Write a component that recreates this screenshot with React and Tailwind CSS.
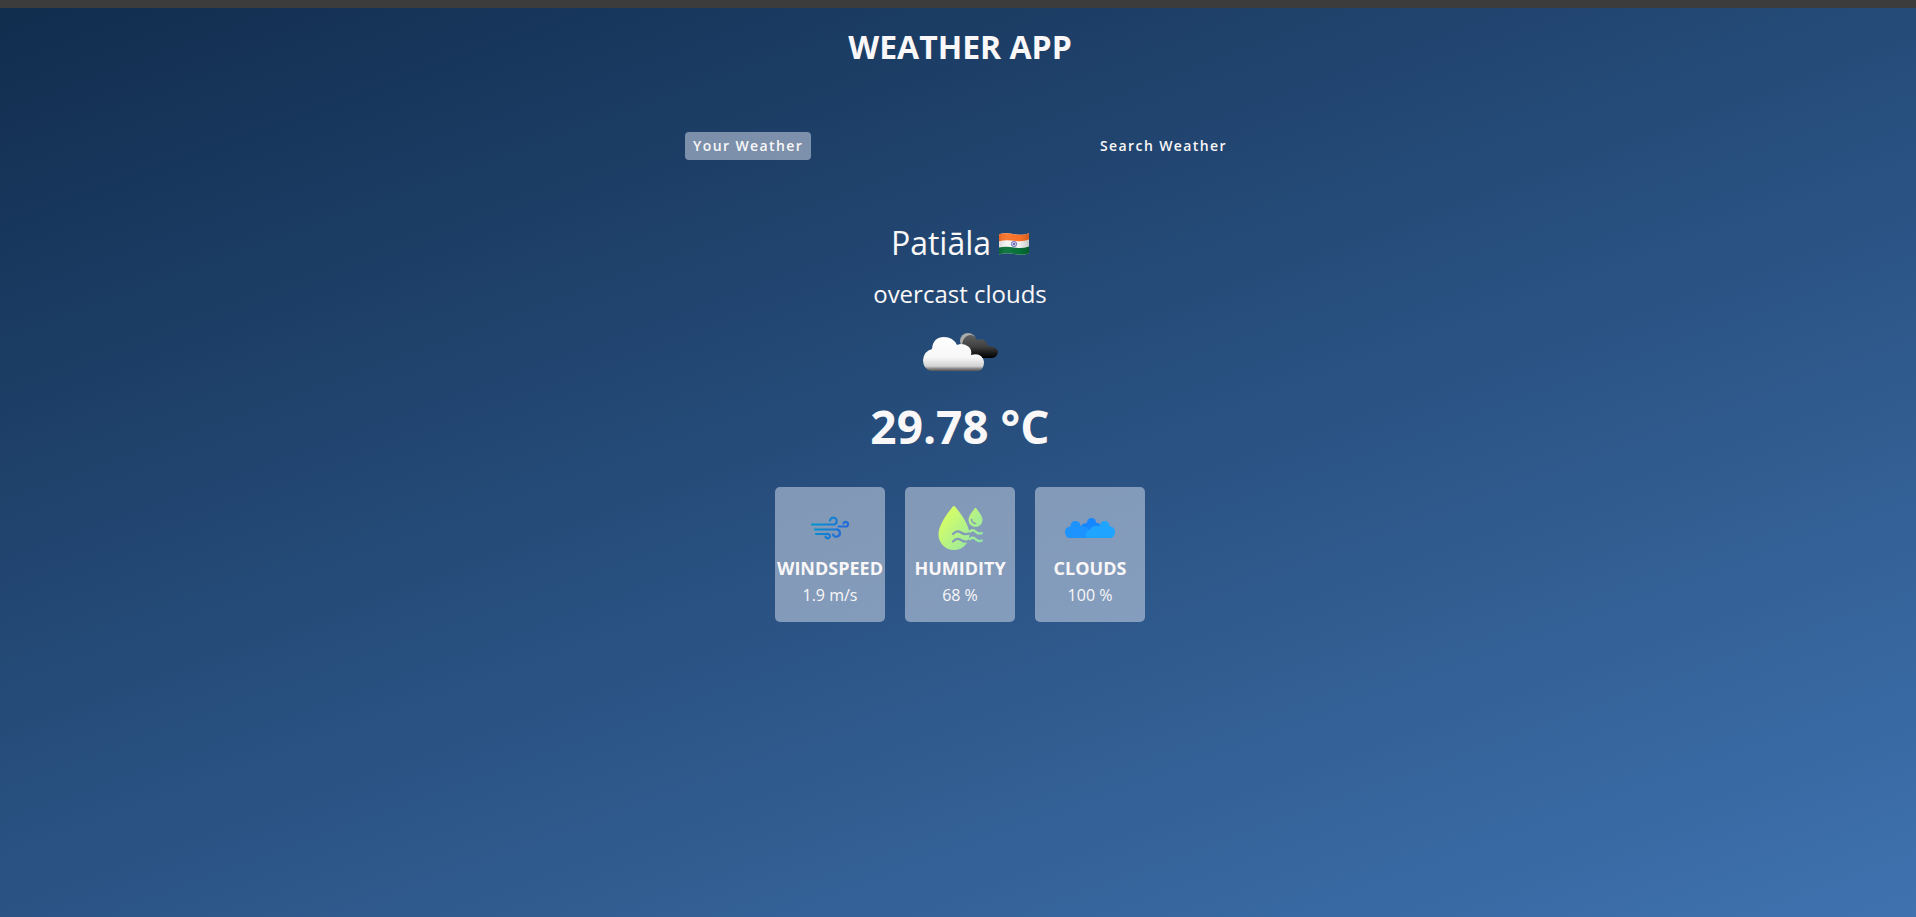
function IndiaFlag() {
  return (
    <svg viewBox="0 0 30 22" className="h-[22px] w-[30px]" role="img" aria-label="India">
      <defs>
        <clipPath id="flagShape">
          <path d="M0 1.2C5-.3 9 .2 15 1.2S25 2 30 .2V20.4C25 22 20 22 15 21S5 20 0 21.6Z" />
        </clipPath>
        <linearGradient id="flagShade" x1="0" x2="1">
          <stop offset="0" stopColor="#000" stopOpacity=".12" />
          <stop offset=".3" stopColor="#fff" stopOpacity=".05" />
          <stop offset=".7" stopColor="#000" stopOpacity=".02" />
          <stop offset="1" stopColor="#000" stopOpacity=".18" />
        </linearGradient>
      </defs>
      <g clipPath="url(#flagShape)">
        <rect width="30" height="22" fill="#f5f5f5" />
        <path d="M0 0H30V6.600C25 8.600 20 8.600 15 7.800S5 7 0 8.200Z" fill="#ff7328" />
        <path d="M0 14.600C5 13.200 10 13.500 15 14.400S25 15 30 13.400V22H0Z" fill="#077238" />
        <circle cx="15" cy="11" r="2.700" fill="#c5c5e8" stroke="#6a6ab4" strokeWidth=".8" />
        <circle cx="15" cy="11" r="1" fill="#4e4ea4" />
        <rect width="30" height="22" fill="url(#flagShade)" />
      </g>
    </svg>
  );
}

function OvercastIcon() {
  return (
    <svg viewBox="0 0 100 100" className="size-[100px]" role="img" aria-label="overcast clouds">
      <defs>
        <linearGradient id="frontCloud" x1="0" y1="0" x2="0" y2="1">
          <stop offset="0" stopColor="#fff" />
          <stop offset=".6" stopColor="#f7f7f7" />
          <stop offset=".86" stopColor="#d2d2d2" />
          <stop offset=".93" stopColor="#888" />
          <stop offset="1" stopColor="#555" />
        </linearGradient>
        <linearGradient id="backCloud" gradientUnits="userSpaceOnUse" x1="0" y1="32" x2="0" y2="57">
          <stop offset="0" stopColor="#666" />
          <stop offset=".55" stopColor="#404040" />
          <stop offset=".8" stopColor="#1a1a1a" />
          <stop offset="1" stopColor="#000" />
        </linearGradient>
      </defs>
      <circle cx="58" cy="40" r="8" fill="#aaa" />
      <path d="M52 57V44Q53 35 60 34Q65 34 67 39Q75 36 78 45Q87 45 88 51Q87 57 81 57Z" fill="url(#backCloud)" />
      <path d="M21 70Q13 68 13 59Q14 50 22 48Q23 36 34 36Q43 36 47 44Q53 41 59 46Q62 49 61 54Q72 51 74 61Q74 68 69 70Z" fill="url(#frontCloud)" />
    </svg>
  );
}

function WindIcon() {
  return (
    <svg viewBox="0 0 50 50" className="size-[50px]" fill="none" strokeWidth="2.200" strokeLinecap="round" aria-hidden="true">
      <defs>
        <linearGradient id="windBlue" gradientUnits="userSpaceOnUse" x1="14" y1="14" x2="40" y2="30">
          <stop offset="0" stopColor="#0094d1" />
          <stop offset="1" stopColor="#2668d8" />
        </linearGradient>
      </defs>
      <g stroke="url(#windBlue)">
        <path d="M7 21.500H28A3.400 3.400 0 1 0 25 17.500" />
        <path d="M33.500 23.500H40.500A2.300 2.300 0 1 0 38.500 20.500" />
        <path d="M10 26.500H31A3.600 3.600 0 1 1 28 31.500" />
        <path d="M11 31H22A2.200 2.200 0 1 1 20.500 33.500" />
      </g>
    </svg>
  );
}

function HumidityIcon() {
  return (
    <svg viewBox="0 0 50 50" className="size-[50px]" aria-hidden="true">
      <defs>
        <linearGradient id="humidityGreen" gradientUnits="userSpaceOnUse" x1="8" y1="12" x2="45" y2="42">
          <stop offset="0" stopColor="#d8ff64" />
          <stop offset="1" stopColor="#8fe5aa" />
        </linearGradient>
        <mask id="waveCut">
          <rect width="50" height="50" fill="#fff" />
          <g fill="none" stroke="#000" strokeWidth="2.200" strokeLinecap="round">
            <path d="M18 31Q22 26.500 26 29.500T35 30" />
            <path d="M18 38.500Q22 34 26 37T35 37.500" />
          </g>
        </mask>
      </defs>
      <path d="M17.500 4Q19 2 20.500 4C26 11 34.500 22 34.500 31.500A15.500 15.500 0 0 1 3.500 31.500C3.500 22 12 11 17.500 4Z" fill="url(#humidityGreen)" mask="url(#waveCut)" />
      <path d="M40 5Q40.500 4.500 41 5C44 9 47.500 13 47.500 17A7 7 0 0 1 33.500 17C33.500 13 37 9 40 5Z" fill="url(#humidityGreen)" />
      <path d="M36.500 16.500Q37 20 40.500 20.500" fill="none" stroke="#8599b8" strokeWidth="1.500" strokeLinecap="round" />
      <g fill="none" stroke="url(#humidityGreen)" strokeWidth="2.400" strokeLinecap="round">
        <path d="M35 28.500Q38 26 41 29Q44 31.500 46.800 30" />
        <path d="M35 36Q38 33.500 41 36.500Q44 39 46.800 37.500" />
      </g>
    </svg>
  );
}

function CloudsIcon() {
  return (
    <svg viewBox="0 0 50 50" className="size-[50px]" aria-hidden="true">
      <g fill="#1787ff">
        <circle cx="26.500" cy="19.500" r="4.500" />
        <path d="M16 35V23Q18 19.500 23 20H31Q34 19 36 23V35Z" />
      </g>
      <path d="M3.500 35Q0 33 0 29Q0 24 5.500 23.500Q5.500 18 10.500 18Q15 18 15.500 23Q23 23 26 29V35Z" fill="#1c93ff" />
      <path d="M22.500 35Q20 33.500 20.500 31Q21 28 24 27.500Q27 21.500 35 23Q35.500 18 39.500 18Q44 18 44.500 23Q50 24 50 29Q50 33 46.500 35Z" fill="#1fa5ff" />
    </svg>
  );
}

function Stat({ icon, label, value }) {
  return (
    <li className="flex h-[135px] min-w-[110px] flex-col items-center rounded-[5px] bg-[#dbe2ef]/50 px-px pt-4">
      {icon}
      <h3 className="text-[18px] leading-[30px] font-bold uppercase">{label}</h3>
      <p className="text-base leading-6">{value}</p>
    </li>
  );
}

export default function App() {
  return (
    <div className="flex min-h-screen flex-col font-['Open_Sans','Noto_Sans',sans-serif] text-[#f9f7f7]">
      <div className="h-2 bg-[#3c3c3c]" />
      <main className="flex grow flex-col items-center bg-[linear-gradient(160deg,#112d4e_0%,#3f72af_100%)] pl-1">
        <h1 className="mt-5 text-[32px] leading-[38px] font-bold uppercase">Weather App</h1>
        <nav className="mt-[66px] flex w-full max-w-[550px] justify-between text-sm leading-5 font-semibold tracking-widest">
          <button type="button" className="rounded-[4px] bg-[#dbe2ef]/50 px-2 py-1">Your Weather</button>
          <button type="button" className="rounded-[4px] px-2 py-1">Search Weather</button>
        </nav>
        <section className="mt-[63px] flex flex-col items-center">
          <div className="flex items-baseline gap-2 text-[32px] leading-10">
            <h2>Patiāla</h2>
            <IndiaFlag />
          </div>
          <p className="mt-[13px] text-2xl leading-9">overcast clouds</p>
          <div className="-mt-[11px] -mb-[5px]">
            <OvercastIcon />
          </div>
          <p className="text-[46px] leading-[60px] font-bold">29.78 °C</p>
          <ul className="mt-[31px] flex gap-5">
            <Stat icon={<WindIcon />} label="Windspeed" value="1.9 m/s" />
            <Stat icon={<HumidityIcon />} label="Humidity" value="68 %" />
            <Stat icon={<CloudsIcon />} label="Clouds" value="100 %" />
          </ul>
        </section>
      </main>
    </div>
  );
}
